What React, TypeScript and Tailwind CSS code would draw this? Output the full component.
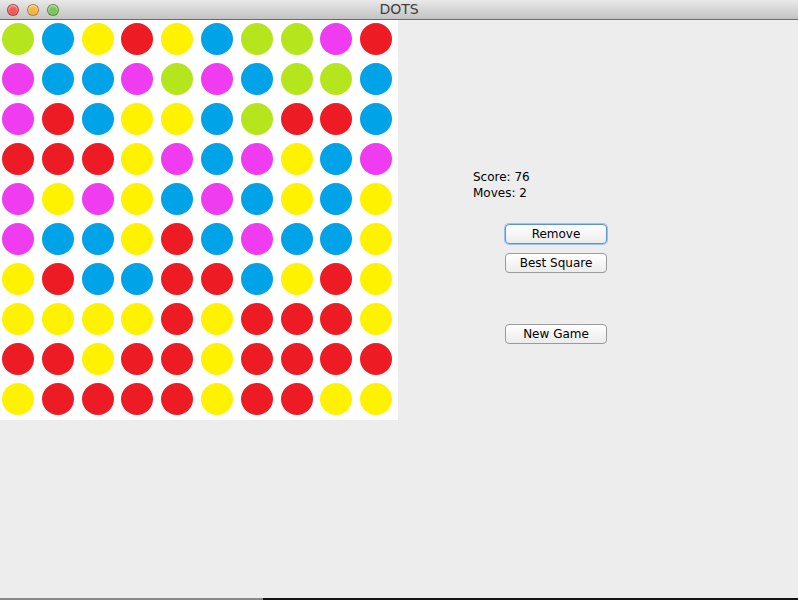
import React from 'react'

const COLORS: Record<string, string> = {
  G: 'bg-[#b5e61d]',
  B: 'bg-[#00a2e8]',
  Y: 'bg-[#fff200]',
  R: 'bg-[#ed1c24]',
  M: 'bg-[#f03cf0]',
}

const BOARD = [
  'GBYRYBGGMR',
  'MBBMGMBGGB',
  'MRBYYBGRRB',
  'RRRYMBMYBM',
  'MYMYBMBYBY',
  'MBBYRBMBBY',
  'YRBBRRBYRY',
  'YYYYRYRRRY',
  'RRYRRYRRRR',
  'YRRRRYRRYY',
]

function TrafficLight({ color }: { color: string }) {
  return (
    <div
      className={`size-[12px] rounded-full border border-black/30 ${color} shadow-[inset_0_1px_2px_rgba(255,255,255,0.7)]`}
    />
  )
}

function MacButton({ label, focused }: { label: string; focused?: boolean }) {
  return (
    <button
      className={`flex h-[20px] w-[102px] items-center justify-center rounded-[4px] border bg-gradient-to-b from-white to-[#ececec] text-[12px] text-black ${
        focused
          ? 'border-[#5b93d3] shadow-[0_0_0_1px_#9cc3ee]'
          : 'border-[#9a9a9a]'
      }`}
    >
      {label}
    </button>
  )
}

export default function App() {
  return (
    <div
      className="flex h-[600px] w-[798px] flex-col bg-[#ededed]"
      style={{ fontFamily: '"DejaVu Sans", sans-serif' }}
    >
      <div className="relative flex h-[20px] items-center border-b border-[#6b6b6b] bg-gradient-to-b from-[#e9e9e9] to-[#c3c3c3]">
        <div className="flex items-center gap-[8px] pl-[7px]">
          <TrafficLight color="bg-[#f05a5a]" />
          <TrafficLight color="bg-[#f5b448]" />
          <TrafficLight color="bg-[#7cc45c]" />
        </div>
        <div className="absolute inset-0 flex items-center justify-center text-[14px] text-[#3f3f3f]">
          DOTS
        </div>
      </div>

      <div className="flex flex-1">
        <div className="grid h-[400px] w-[398px] grid-cols-10 bg-white">
          {BOARD.map((row, r) =>
            row.split('').map((c, i) => (
              <div key={`${r}-${i}`} className="h-[40px] w-[40px]">
                <div className={`ml-[2px] mt-[3px] size-[32px] rounded-full ${COLORS[c]}`} />
              </div>
            )),
          )}
        </div>

        <div className="flex flex-col pl-[75px] pt-[149px]">
          <div className="text-[12px] leading-[16px] text-black">Score: 76</div>
          <div className="text-[12px] leading-[16px] text-black">Moves: 2</div>
          <div className="ml-[32px] mt-[23px] flex flex-col">
            <MacButton label="Remove" focused />
            <div className="mt-[9px]">
              <MacButton label="Best Square" />
            </div>
            <div className="mt-[51px]">
              <MacButton label="New Game" />
            </div>
          </div>
        </div>
      </div>

      <div className="flex h-[2px]">
        <div className="w-[263px] bg-[#8a8a8a]" />
        <div className="flex-1 bg-[#151515]" />
      </div>
    </div>
  )
}
